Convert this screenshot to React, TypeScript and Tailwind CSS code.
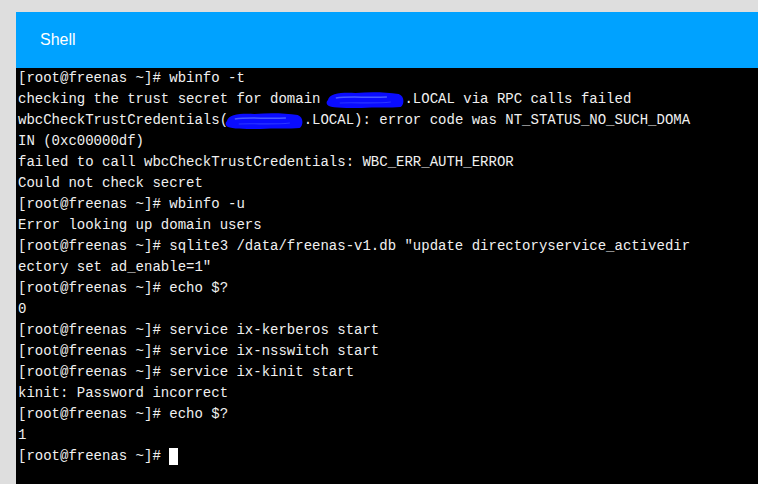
const Redacted = () => (
  <span className="relative inline-block w-[9ch] align-top">
    {'\u00a0'.repeat(9)}
    <svg
      className="absolute left-[-3px] top-[3px] h-[16px] w-[calc(100%+3px)]"
      viewBox="0 0 80 16"
      preserveAspectRatio="none"
    >
      <path
        d="M2 8 C3 1, 18 0, 30 1 C44 0, 60 0, 74 2 C80 4, 80 12, 76 15 C66 16, 50 15, 36 16 C22 16, 8 16, 3 14 C0 12, 0 10, 2 8 Z"
        fill="#0a0cff"
      />
      <path d="M10 6 C24 4, 40 6, 62 5" stroke="#4a5cff" strokeWidth="1.5" fill="none" />
      <path d="M14 11 C30 10, 46 12, 66 10" stroke="#2a36ff" strokeWidth="1.2" fill="none" />
    </svg>
  </span>
);

const lines: React.ReactNode[] = [
  '[root@freenas ~]# wbinfo -t',
  <>
    checking the trust secret for domain <Redacted />.LOCAL via RPC calls failed
  </>,
  <>
    wbcCheckTrustCredentials(<Redacted />.LOCAL): error code was NT_STATUS_NO_SUCH_DOMA
  </>,
  'IN (0xc00000df)',
  'failed to call wbcCheckTrustCredentials: WBC_ERR_AUTH_ERROR',
  'Could not check secret',
  '[root@freenas ~]# wbinfo -u',
  'Error looking up domain users',
  '[root@freenas ~]# sqlite3 /data/freenas-v1.db "update directoryservice_activedir',
  'ectory set ad_enable=1"',
  '[root@freenas ~]# echo $?',
  '0',
  '[root@freenas ~]# service ix-kerberos start',
  '[root@freenas ~]# service ix-nsswitch start',
  '[root@freenas ~]# service ix-kinit start',
  'kinit: Password incorrect',
  '[root@freenas ~]# echo $?',
  '1',
];

export default function App() {
  return (
    <div className="h-[484px] w-[758px] overflow-hidden bg-[#dedede] pl-4 pt-3">
      <div className="flex h-full flex-col">
        <div className="flex h-14 items-center bg-[#00a2ff] pl-6">
          <span className="font-['Liberation_Sans',Arial,sans-serif] text-[16px] text-white">Shell</span>
        </div>
        <div className="flex-1 whitespace-pre bg-black pl-[2px] font-['Liberation_Mono','Courier_New',monospace] text-[14px] leading-[21px] text-[#f0f0f0]">
          {lines.map((line, i) => (
            <div key={i}>{line}</div>
          ))}
          <div>
            [root@freenas ~]#{' '}
            <span className="inline-block h-[17px] w-[9px] translate-y-[2px] bg-white align-top" />
          </div>
        </div>
      </div>
    </div>
  );
}
